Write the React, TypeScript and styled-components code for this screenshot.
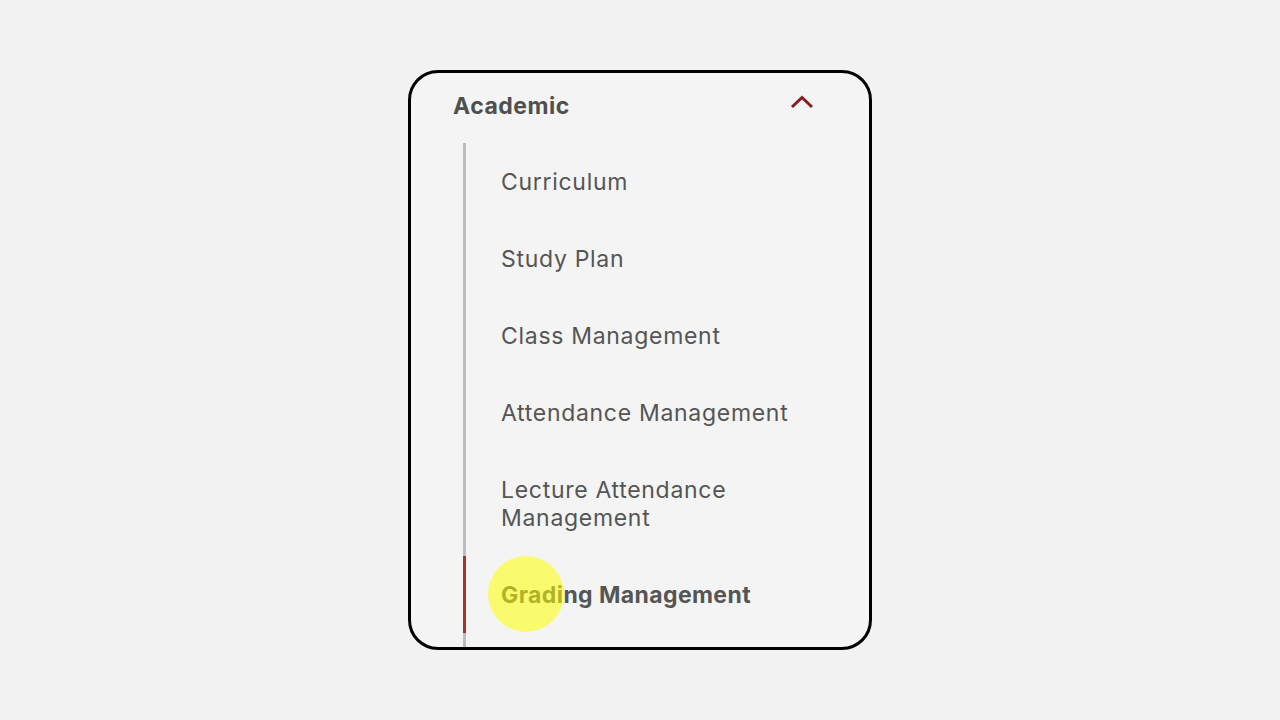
import styled, { createGlobalStyle } from 'styled-components';

const GlobalStyle = createGlobalStyle`
    html, body {
        margin: 0;
        padding: 0;
        background: #f2f2f2;
    }
    body {
        font-family: Inter, "Noto Sans", sans-serif;
    }
`;

const Page = styled.div`
    width: 1280px;
    height: 720px;
    display: flex;
    align-items: center;
    justify-content: center;
`;

const Card = styled.nav`
    position: relative;
    box-sizing: border-box;
    width: 464px;
    height: 580px;
    border: 3px solid #000;
    border-radius: 30px;
    background: #f4f4f4;
    overflow: hidden;
`;

const Header = styled.div`
    display: flex;
    align-items: center;
    justify-content: space-between;
    padding: 19px 55px 23px 42px;
`;

const Title = styled.span`
    font-size: 23px;
    line-height: 28px;
    font-weight: 700;
    color: #4f4f4f;
    letter-spacing: 0.5px;
`;

const Chevron = styled.svg`
    display: block;
    margin-top: -8px;
`;

const List = styled.ul`
    list-style: none;
    margin: 0 0 0 52px;
    padding: 0 0 40px;
    border-left: 3px solid #bdbdbd;
`;

const Item = styled.li<{ $active?: boolean }>`
    position: relative;
    margin-left: -3px;
    padding: 25px 30px 24px 35px;
    border-left: 3px solid ${(p) => (p.$active ? '#a8322d' : 'transparent')};
    font-size: 23px;
    line-height: 28px;
    font-weight: ${(p) => (p.$active ? 700 : 400)};
    color: #555;
    letter-spacing: ${(p) => (p.$active ? '0.4px' : '0.7px')};
`;

const Highlight = styled.span`
    position: absolute;
    left: 22px;
    top: 0;
    width: 76px;
    height: 76px;
    border-radius: 50%;
    background: rgba(255, 255, 0, 0.55);
    pointer-events: none;
`;

const items = [
    'Curriculum',
    'Study Plan',
    'Class Management',
    'Attendance Management',
    'Lecture Attendance Management',
    'Grading Management',
];

export default function App() {
    return (
        <Page>
            <GlobalStyle />
            <Card>
                <Header>
                    <Title>Academic</Title>
                    <Chevron width="24" height="14" viewBox="0 0 24 14">
                        <path d="M2 12 L12 2.5 L22 12" fill="none" stroke="#8b1c1c" strokeWidth="3" />
                    </Chevron>
                </Header>
                <List>
                    {items.map((label) => (
                        <Item key={label} $active={label === 'Grading Management'}>
                            {label}
                            {label === 'Grading Management' && <Highlight />}
                        </Item>
                    ))}
                </List>
            </Card>
        </Page>
    );
}
